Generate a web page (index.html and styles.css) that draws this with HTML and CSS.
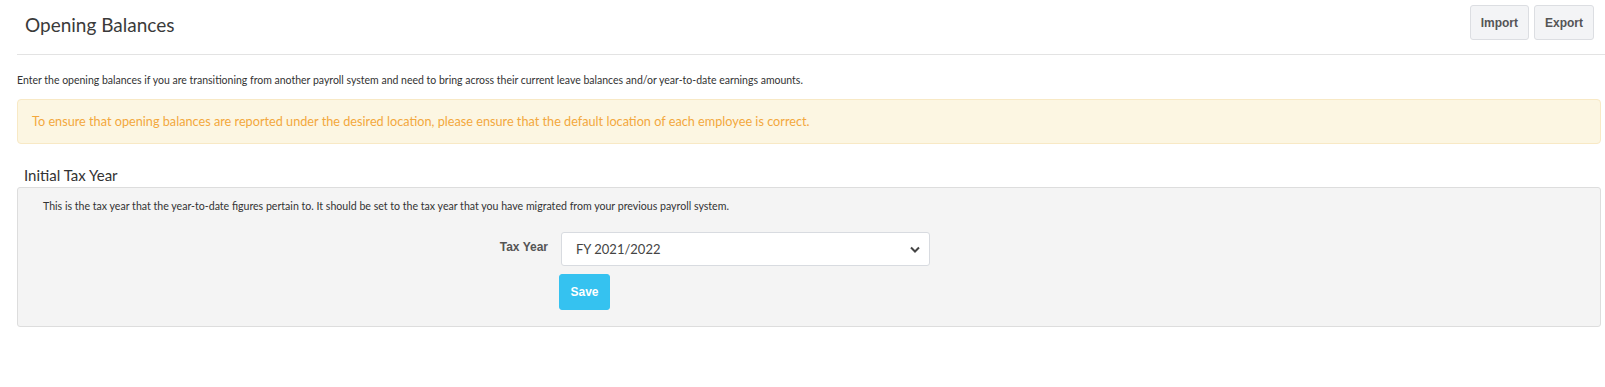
FILE: index.html
```html
<!DOCTYPE html>
<html lang="en">
<head>
  <meta charset="UTF-8">
  <title>Opening Balances</title>
  <link rel="stylesheet" href="styles.css">
</head>
<body>

  <div class="page">

    <!-- header -->
    <div class="page-header">
      <h1 class="page-title">Opening Balances</h1>
      <div class="header-actions">
        <button class="btn btn-default">Import</button>
        <button class="btn btn-default">Export</button>
      </div>
    </div>

    <p class="intro">Enter the opening balances if you are transitioning from another payroll system and need to bring across their current leave balances and/or year-to-date earnings amounts.</p>

    <div class="alert-warning">
      To ensure that opening balances are reported under the desired location, please ensure that the default location of each employee is correct.
    </div>

    <!-- initial tax year -->
    <h2 class="section-title">Initial Tax Year</h2>
    <div class="panel">
      <p class="panel-text">This is the tax year that the year-to-date figures pertain to. It should be set to the tax year that you have migrated from your previous payroll system.</p>

      <div class="form-row form-row-first">
        <label class="form-label" for="tax-year">Tax Year</label>
        <div class="select-wrap">
          <select class="form-select" id="tax-year">
            <option>FY 2021/2022</option>
          </select>
          <svg class="select-caret" width="10" height="7" viewBox="0 0 10 7">
            <path d="M1 1.5 L5 5.5 L9 1.5" fill="none" stroke="#444" stroke-width="2"/>
          </svg>
        </div>
      </div>

      <div class="form-row">
        <div class="form-label"></div>
        <button class="btn btn-save">Save</button>
      </div>
    </div>

  </div>

</body>
</html>
```

FILE: styles.css
```css
body {
  margin: 0;
  background: #fff;
  font-family: 'Lato', 'Open Sans', sans-serif;
  color: #333;
}

.page {
  padding: 0 4px 0 17px;
}

.page-header {
  display: flex;
  justify-content: space-between;
  align-items: flex-start;
  height: 54px;
  margin-right: -4px;
  border-bottom: 1px solid #e3e3e3;
}

.page-title {
  margin: 14px 0 0 8px;
  font-size: 19px;
  line-height: 22px;
  font-weight: normal;
  color: #3a3a3a;
}

.header-actions {
  display: flex;
  gap: 5px;
  margin: 5px 11px 0 0;
}

.btn {
  font-family: 'Liberation Sans', Arial, sans-serif;
  font-weight: bold;
  font-size: 12px;
  border-radius: 3px;
  cursor: pointer;
}

.btn-default {
  height: 35px;
  padding: 0 10px;
  background: #f3f4f6;
  border: 1px solid #dcdee2;
  color: #555;
}

.intro {
  margin: 18px 0 0 0;
  font-size: 10.5px;
  line-height: 14px;
  color: #333;
}

.alert-warning {
  margin-top: 12px;
  height: 45px;
  box-sizing: border-box;
  padding: 0 14px;
  line-height: 43px;
  background: #fcf6e2;
  border: 1px solid #f8e9c5;
  border-radius: 4px;
  color: #f3a83d;
  font-size: 12.7px;
}

.section-title {
  margin: 22px 0 0 7px;
  font-size: 15px;
  line-height: 18px;
  font-weight: normal;
  color: #333;
}

.panel {
  margin-top: 3px;
  height: 140px;
  box-sizing: border-box;
  padding: 11px 25px 0;
  background: #f4f4f4;
  border: 1px solid #dddddd;
  border-radius: 3px;
}

.panel-text {
  margin: 0;
  font-size: 10.6px;
  line-height: 14px;
  color: #333;
}

.form-row {
  display: flex;
  align-items: flex-start;
  gap: 13px;
  margin-top: 8px;
}

.form-row-first {
  margin-top: 19px;
}

.form-label {
  width: 505px;
  text-align: right;
  font-family: 'Liberation Sans', Arial, sans-serif;
  font-size: 12px;
  line-height: 14px;
  font-weight: bold;
  color: #555;
  padding-top: 8px;
}

.select-wrap {
  position: relative;
}

.form-select {
  display: block;
  appearance: none;
  -webkit-appearance: none;
  width: 369px;
  height: 34px;
  padding: 0 14px;
  background: #fff;
  border: 1px solid #d8dbe0;
  border-radius: 3px;
  font-family: 'Lato', 'Open Sans', sans-serif;
  font-size: 13px;
  color: #444;
}

.select-caret {
  position: absolute;
  right: 10px;
  top: 14px;
  pointer-events: none;
}

.btn-save {
  margin-left: -2px;
  height: 36px;
  width: 51px;
  padding: 0;
  background: #35c2f0;
  border: 1px solid #35c2f0;
  color: #fff;
}
```
